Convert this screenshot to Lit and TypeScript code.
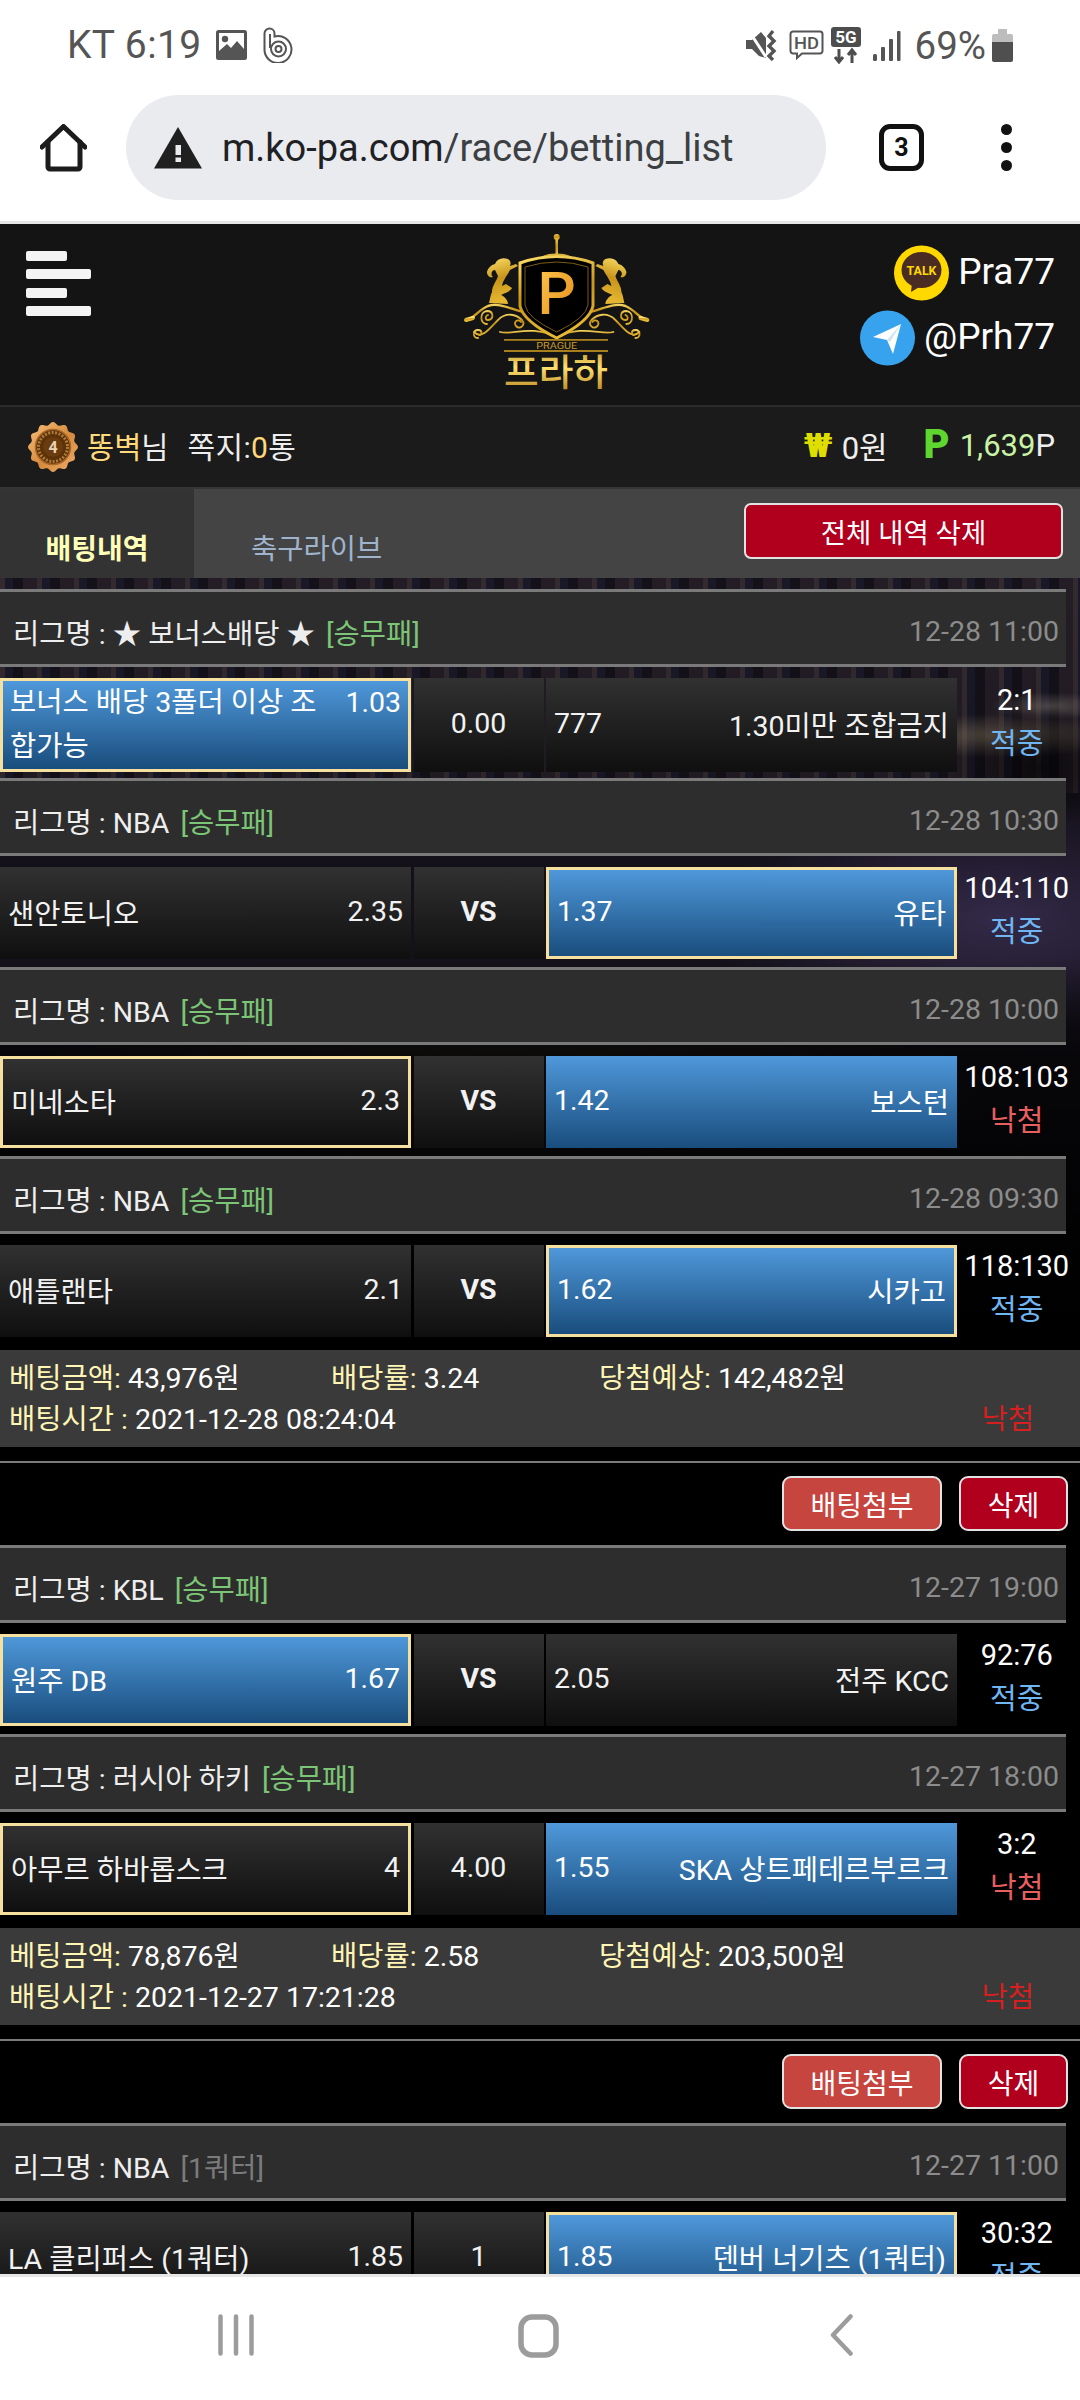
import { LitElement, html, css, svg } from "lit";
import { customElement } from "lit/decorators.js";
import { classMap } from "lit/directives/class-map.js";

interface Match {
  league: string; tag: string; grayTag?: boolean; date: string;
  home: string; homeOdds: string; mid: string; bold?: boolean;
  awayOdds: string; away: string;
  homeBlue?: boolean; homeBorder?: boolean; awayBlue?: boolean; awayBorder?: boolean;
  score: string; hit: boolean; wrapHome?: boolean;
}

const first: Match[] = [
  { league: "★ 보너스배당 ★", tag: "[승무패]", date: "12-28 11:00", home: "보너스 배당 3폴더 이상 조합가능", homeOdds: "1.03", mid: "0.00", awayOdds: "777", away: "1.30미만 조합금지", homeBlue: true, homeBorder: true, score: "2:1", hit: true, wrapHome: true },
  { league: "NBA", tag: "[승무패]", date: "12-28 10:30", home: "샌안토니오", homeOdds: "2.35", mid: "VS", bold: true, awayOdds: "1.37", away: "유타", awayBlue: true, awayBorder: true, score: "104:110", hit: true },
  { league: "NBA", tag: "[승무패]", date: "12-28 10:00", home: "미네소타", homeOdds: "2.3", mid: "VS", bold: true, awayOdds: "1.42", away: "보스턴", homeBorder: true, awayBlue: true, score: "108:103", hit: false },
  { league: "NBA", tag: "[승무패]", date: "12-28 09:30", home: "애틀랜타", homeOdds: "2.1", mid: "VS", bold: true, awayOdds: "1.62", away: "시카고", awayBlue: true, awayBorder: true, score: "118:130", hit: true },
];
const second: Match[] = [
  { league: "KBL", tag: "[승무패]", date: "12-27 19:00", home: "원주 DB", homeOdds: "1.67", mid: "VS", bold: true, awayOdds: "2.05", away: "전주 KCC", homeBlue: true, homeBorder: true, score: "92:76", hit: true },
  { league: "러시아 하키", tag: "[승무패]", date: "12-27 18:00", home: "아무르 하바롭스크", homeOdds: "4", mid: "4.00", awayOdds: "1.55", away: "SKA 상트페테르부르크", homeBorder: true, awayBlue: true, score: "3:2", hit: false },
];
const third: Match[] = [
  { league: "NBA", tag: "[1쿼터]", grayTag: true, date: "12-27 11:00", home: "LA 클리퍼스 (1쿼터)", homeOdds: "1.85", mid: "1", awayOdds: "1.85", away: "덴버 너기츠 (1쿼터)", awayBlue: true, awayBorder: true, score: "30:32", hit: true },
];

function scallop(cx: number, cy: number, r: number, amp: number, n: number): string {
  let d = "";
  for (let i = 0; i <= 120; i++) {
    const t = (i / 120) * Math.PI * 2;
    const rr = r + amp * Math.cos(n * t);
    d += `${i ? "L" : "M"}${(cx + rr * Math.sin(t)).toFixed(2)} ${(cy - rr * Math.cos(t)).toFixed(2)}`;
  }
  return d + "Z";
}

const lion = svg`<path d="M68 39C62 37 57 39 55 44C51 45 48 48 47 52C47 56 50 58 53 57C50 54 52 50 55 50L58 56C56 62 52 66 52 72C50 76 50 80 49 83L68 84C68 80 64 76 61 75C64 73 70 72 72 68L66 64L62 66C63 60 67 56 70 50L78 46L76 44L70 46C71 43 71 41 68 39Z" fill="url(#gold)"/>`;
const scrolls = svg`<g fill="none" stroke="url(#gold)" stroke-width="1.8" stroke-linecap="round">
  <path d="M26 100C34 99 38 90 48 86C60 82 72 90 84 92" stroke-width="2.4"/>
  <path d="M26 100L33 98" stroke-width="4"/>
  <path d="M34 112C42 120 50 108 58 100C66 92 76 94 82 100C86 105 80 110 76 106C73 102 78 98 81 102"/>
  <path d="M38 118C32 118 33 110 38 110C43 110 42 116 39 115"/>
  <path d="M47 104C40 104 39 92 47 91C54 91 54 100 48 100C45 100 45 96 48 95"/>
  <path d="M60 112C72 116 90 104 116 117"/>
</g>`;

@customElement("app-root")
export class AppRoot extends LitElement {
  static styles = css`
    :host { display: block; width: 1080px; height: 2400px; background: #fff; overflow: hidden;
      font-family: Roboto, "Noto Sans CJK KR", sans-serif; }
    .shell { display: flex; flex-direction: column; height: 2400px; }
    svg { display: block; flex: none; }

    .status { height: 85px; flex: none; display: flex; align-items: center; padding: 5px 67px 0; box-sizing: border-box;
      color: #555; font-size: 39px; background: #fff; }
    .clock { margin-right: 14px; letter-spacing: 0.4px; white-space: nowrap; }
    .b-icon { margin-left: 16px; }
    .status-right { margin-left: auto; display: flex; align-items: center; }
    .i-hd { margin-left: 12px; }
    .i-5g { margin-left: 7px; }
    .i-sig { margin-left: 11px; }
    .pct { margin: 0 6px 0 14px; font-size: 38.5px; }

    .toolbar { height: 139px; flex: none; display: flex; align-items: center; background: #fff; box-sizing: border-box;
      border-bottom: 3px solid #e6e6e4; padding: 0 0 11px 40px; }
    .pill { width: 700px; height: 105px; margin-left: 39px; border-radius: 53px; background: #eaebef; display: flex;
      align-items: center; padding-left: 28px; box-sizing: border-box; }
    .url { margin-left: 20px; font-size: 38px; color: #3c4043; white-space: nowrap; }
    .url b { font-weight: 400; color: #202124; }
    .tabcount { margin-left: 53px; width: 45px; height: 47px; box-sizing: border-box; border: 5px solid #111; border-radius: 11px;
      display: flex; align-items: center; justify-content: center; font-size: 25px; font-weight: 700; color: #111; }
    .dots { margin-left: 77px; display: flex; flex-direction: column; gap: 7px; }
    .dots i { width: 11px; height: 11px; border-radius: 50%; background: #111; display: block; }

    .page { flex: 1; min-height: 0; overflow: hidden; background: #000; color: #fff; font-size: 28.5px; }

    .head { height: 181px; background: #141414; display: flex; box-sizing: border-box; padding: 27px 25px 0 26px; }
    .burger { display: flex; flex-direction: column; gap: 8.3px; }
    .burger i { display: block; height: 10px; background: #f4f4f4; border-radius: 2px; width: 65px; }
    .burger i:nth-child(odd) { width: 41px; }
    .logo { margin-left: 349px; margin-top: -31px; }
    .contacts { margin-left: auto; display: flex; flex-direction: column; align-items: flex-end; gap: 10px; margin-top: -6px;
      font-size: 37px; }
    .contact { display: flex; align-items: center; gap: 9px; height: 55px; }
    .contact span { padding-bottom: 3px; }

    .user { height: 82px; box-sizing: border-box; border-top: 2px solid #2b2b2b; background: #1b1b1b; display: flex; align-items: center;
      padding: 0 25px 0 28px; }
    .nick { margin: 0 0 5px 9px; font-size: 29.5px; color: #eee; }
    .gold { color: #ffd97a; }
    .msg { margin: 0 0 5px 19px; font-size: 30px; color: #eee; letter-spacing: .4px; }
    .wallet { margin: 0 0 4px auto; display: flex; align-items: center; font-size: 31px; color: #eee; }
    .won { color: #dede00; font-weight: 900; font-size: 34px; margin-right: 9px; }
    .pts { color: #5ed62f; font-weight: 900; font-size: 40px; margin: 0 10px 0 36px; line-height: 1; }
    .pval { color: #c9f2a6; }
    .pval span { color: #eee; }

    .tabs { height: 91px; background: #444; border-top: 2px solid #353535; box-sizing: border-box; display: flex; }
    .tab { width: 194px; display: flex; align-items: flex-end; justify-content: center; padding-bottom: 11px; box-sizing: border-box; font-size: 28px; }
    .tab.on { background: #333; color: #ffffb8; font-weight: 700; }
    .tab.off { width: auto; margin-left: 57px; color: #a0b3cd; font-size: 28.5px; }
    .btn { box-sizing: border-box; border: 2px solid #e2e2e2; border-radius: 7px; background: #b0001e; color: #fff; display: flex;
      align-items: center; justify-content: center; font-size: 28px; white-space: nowrap; }
    .btn.all { width: 319px; height: 56px; margin: 14px 17px 0 auto; font-size: 27.5px; }

    .scene { padding-top: 11px; background:
      linear-gradient(180deg, rgba(0,0,0,0) 0, rgba(0,0,0,.15) 270px, rgba(0,0,0,.1) 380px, rgba(0,0,0,.7) 480px, #000 740px) 0 0 / 100% 100% no-repeat,
      radial-gradient(90px 60px at 1040px 190px, rgba(0,0,0,.65), transparent) 0 0 / 100% 100% no-repeat,
      radial-gradient(120px 22px at 1000px 158px, rgba(190,170,130,.4), transparent) 0 0 / 100% 100% no-repeat,
      radial-gradient(60px 14px at 1050px 128px, rgba(200,190,170,.3), transparent) 0 0 / 100% 100% no-repeat,
      repeating-linear-gradient(90deg, rgba(150,125,110,.22) 0 5px, rgba(40,50,90,.18) 5px 13px, rgba(0,0,0,.12) 13px 23px, rgba(130,100,100,.12) 23px 37px) 0 0 / 100% 215px no-repeat,
      radial-gradient(300px 120px at 1000px 340px, #3a2f52, transparent) 0 0 / 100% 100% no-repeat,
      radial-gradient(500px 110px at 500px 520px, #33291f, transparent) 0 0 / 100% 100% no-repeat,
      #17131d;
    }

    .league { width: 1066px; height: 78px; box-sizing: border-box; background: #2d2d2d; border-top: 3px solid #7a7a7a; border-bottom: 3px solid #7a7a7a;
      display: flex; align-items: center; padding: 7px 7px 0 13px; color: #eee; white-space: pre; }
    .tag { color: #7cc576; margin-left: 11px; }
    .tag.gray { color: #7b7b7b; }
    .date { margin-left: auto; color: #8c8c8c; }

    .row { width: 1074px; height: 92px; margin: 11px 0 8px; display: grid; grid-template-columns: 411px 130px 411px 1fr; column-gap: 2.5px; }
    .cell { box-sizing: border-box; background: linear-gradient(180deg, #313131, #0f0f0f); display: flex; align-items: center; justify-content: space-between;
      padding: 0 8px 3px; color: #f2f2f2; white-space: nowrap; min-width: 0; }
    .cell.blue { background: linear-gradient(180deg, #4f98da, #194d7d); color: #fff; }
    .cell.pick { border: 3px solid #f5e0a0; padding: 0 8px 3px; }
    .cell.mid { justify-content: center; }
    .cell.mid.vs { font-weight: 700; }
    .cell.wrap { display: block; white-space: normal; line-height: 44px; padding: 0 7px; }
    .wrap .odd { float: right; margin-left: 10px; }
    .score { display: flex; flex-direction: column; align-items: center; justify-content: center; line-height: 44px; white-space: nowrap; margin-top: -6px; font-size: 29px; }
    .hit { color: #6fb6f2; }
    .miss { color: #e85f60; }

    .summary { height: 97px; margin-top: 13px; box-sizing: border-box; background: #3a3a3a; padding: 5px 46px 0 9px; display: grid;
      grid-template-columns: 322px 268px 1fr auto; grid-auto-rows: 41px; align-items: center; white-space: nowrap; }
    .lbl { color: #fff5b5; }
    .time { grid-column: 1 / 4; }
    .lost { color: #d5201f; }

    .sep { height: 2px; background: #7a7a7a; margin-top: 14px; }
    .actions { display: flex; justify-content: flex-end; gap: 17px; height: 55px; padding-right: 12px; margin: 13px 0 14px; }
    .btn.att { width: 160px; background: #c6453e; border-radius: 9px; }
    .btn.del { width: 109px; border-radius: 9px; }

    .nav { height: 126px; flex: none; box-sizing: border-box; border-top: 3px solid #e6e6e6; background: #fff; display: grid;
      grid-template-columns: 218px 36px 264px 41px 271px 23px; padding-top: 37px; }
  `;

  private match(m: Match) {
    const home = classMap({ cell: true, blue: !!m.homeBlue, pick: !!m.homeBorder, wrap: !!m.wrapHome });
    const away = classMap({ cell: true, blue: !!m.awayBlue, pick: !!m.awayBorder });
    return html`
      <div class="league">
        <span>리그명 : ${m.league}</span><span class=${classMap({ tag: true, gray: !!m.grayTag })}>${m.tag}</span>
        <span class="date">${m.date}</span>
      </div>
      <div class="row">
        <div class=${home}>
          ${m.wrapHome
            ? html`<span class="odd">${m.homeOdds}</span>${m.home}`
            : html`<span>${m.home}</span><span>${m.homeOdds}</span>`}
        </div>
        <div class=${classMap({ cell: true, mid: true, vs: !!m.bold })}>${m.mid}</div>
        <div class=${away}><span>${m.awayOdds}</span><span>${m.away}</span></div>
        <div class="score">
          <span>${m.score}</span>
          <span class=${m.hit ? "hit" : "miss"}>${m.hit ? "적중" : "낙첨"}</span>
        </div>
      </div>`;
  }

  private summary(amount: string, rate: string, win: string, time: string) {
    return html`
      <div class="summary">
        <div><span class="lbl">베팅금액:</span> ${amount}</div>
        <div><span class="lbl">배당률:</span> ${rate}</div>
        <div><span class="lbl">당첨예상:</span> ${win}</div>
        <div></div>
        <div class="time"><span class="lbl">배팅시간 :</span> ${time}</div>
        <div class="lost">낙첨</div>
      </div>
      <div class="sep"></div>
      <div class="actions">
        <div class="btn att">배팅첨부</div>
        <div class="btn del">삭제</div>
      </div>`;
  }

  private statusBar() {
    return html`<div class="status">
      <span class="clock">KT 6:19</span>
      <svg width="31" height="30" viewBox="0 0 31 30"><rect width="31" height="30" rx="2.5" fill="#555"/><rect x="3" y="3" width="25" height="18" fill="#fff"/><circle cx="9" cy="9" r="3.2" fill="#555"/><path d="M3 21L11 14L15 18L21 11L28 19V24H3Z" fill="#555"/></svg>
      <svg class="b-icon" width="30" height="36" viewBox="0 0 30 36" fill="none" stroke="#555" stroke-width="2"><path d="M1.500 22V6.500a5 5 0 0 1 10 0V9.500a13.500 13.500 0 1 1-10 12.500Z"/><path d="M7 21V7"/><circle cx="15.500" cy="22" r="7.500"/><circle cx="15.500" cy="22" r="3"/></svg>
      <div class="status-right">
        <svg width="31" height="32" viewBox="0 0 31 32"><path d="M0 11H6L15 3L20 9V29L13 27L6 20H0Z" fill="#555"/><path d="M3 2L20 28" stroke="#fff" stroke-width="3"/><path d="M27 2L23 7L28 12L23 17L28 22L23 27L27 31" fill="none" stroke="#555" stroke-width="3.400"/></svg>
        <svg class="i-hd" width="35" height="30" viewBox="0 0 35 30"><path d="M4 1.500H31a2.500 2.500 0 0 1 2.500 2.500V21a2.500 2.500 0 0 1-2.500 2.500H13L8 28V23.500H4A2.500 2.500 0 0 1 1.500 21V4A2.500 2.500 0 0 1 4 1.500Z" fill="#fff" stroke="#555" stroke-width="2"/><text x="17.500" y="19" text-anchor="middle" font-family="Roboto" font-size="17" font-weight="500" fill="#555" textLength="25" lengthAdjust="spacingAndGlyphs">HD</text></svg>
        <svg class="i-5g" width="30" height="37" viewBox="0 0 30 37"><rect width="30" height="20" rx="3" fill="#4d4d4d"/><text x="15" y="16" text-anchor="middle" font-family="Roboto" font-size="17" font-weight="700" fill="#fff">5G</text><path d="M8 22V34M4 30L8 35L12 30M21 36V24M17 28L21 23L25 28" fill="none" stroke="#4d4d4d" stroke-width="3"/></svg>
        <svg class="i-sig" width="29" height="31" viewBox="0 0 29 31" fill="#555"><rect x="1" y="24" width="4" height="7" rx="1.500"/><rect x="9" y="17" width="4" height="14" rx="1"/><rect x="17" y="9" width="4" height="22" rx="1"/><rect x="25" y="1" width="3.500" height="30" rx="1"/></svg>
        <span class="pct">69%</span>
        <svg width="21" height="33" viewBox="0 0 21 33"><rect x="6" y="0" width="9" height="6" fill="#bdbdbd"/><path d="M2 5H19a2 2 0 0 1 2 2V13H0V7a2 2 0 0 1 2-2Z" fill="#bdbdbd"/><path d="M0 13H21V31a2 2 0 0 1-2 2H2a2 2 0 0 1-2-2Z" fill="#4f4f4f"/></svg>
      </div>
    </div>`;
  }

  private toolbar() {
    return html`<div class="toolbar">
      <svg width="47" height="48" viewBox="0 0 47 48" fill="none" stroke="#1c1c1c" stroke-width="5" stroke-linecap="round" stroke-linejoin="round"><path d="M2 23L23.500 2.500L45 23"/><path d="M8 18V43a2 2 0 0 0 2 2H38a2 2 0 0 0 2-2V18"/></svg>
      <div class="pill">
        <svg width="48" height="42" viewBox="0 0 48 42"><path d="M24 0L48 41.500H0Z" fill="#202020"/><rect x="21.500" y="18" width="5.500" height="10" fill="#eaebef"/><rect x="21.500" y="30.500" width="5.500" height="4.500" fill="#eaebef"/></svg>
        <span class="url"><b>m.ko-pa.com</b>/race/betting_list</span>
      </div>
      <div class="tabcount">3</div>
      <div class="dots"><i></i><i></i><i></i></div>
    </div>`;
  }

  private logo() {
    return html`<svg class="logo" width="220" height="175" viewBox="0 0 220 175">
      <defs>
        <linearGradient id="gold" x1="0" y1="0" x2="0.2" y2="1"><stop offset="0" stop-color="#fbe06a"/><stop offset=".5" stop-color="#c8941a"/><stop offset="1" stop-color="#e6b832"/></linearGradient>
        <linearGradient id="goldp" x1="0" y1="0" x2="1" y2="1"><stop offset="0" stop-color="#ffc850"/><stop offset="1" stop-color="#e08a16"/></linearGradient>
        <linearGradient id="goldt" x1="0" y1="0" x2="0" y2="1"><stop offset="0" stop-color="#a87a12"/><stop offset=".45" stop-color="#ffe070"/><stop offset="1" stop-color="#a87612"/></linearGradient>
      </defs>
      <rect x="115.500" y="18" width="2.500" height="20" fill="url(#gold)"/>
      <circle cx="116.700" cy="17" r="3" fill="url(#gold)"/>
      <path d="M100 38C105 32 128 32 133 38L116.700 35Z" fill="url(#gold)"/>
      ${lion}
      <g transform="translate(233.400,0) scale(-1,1)">${lion}${scrolls}</g>
      ${scrolls}
      <path d="M80 43Q117 30 153 43L153 86Q150 101 116.700 118Q83 101 80 86Z" fill="#000" stroke="url(#gold)" stroke-width="3"/>
      <path d="M85 47Q117 37 148 47L148 85Q146 98 116.700 112Q87 98 85 85Z" fill="none" stroke="#7a5c14" stroke-width="1"/>
      <text x="116.700" y="94" text-anchor="middle" font-family="Roboto" font-weight="500" font-size="60" fill="url(#goldp)">P</text>
      <rect x="64" y="119" width="104" height="1.800" fill="#a97f1d"/>
      <rect x="64" y="130" width="104" height="2" fill="#a97f1d"/>
      <text x="116.700" y="129" text-anchor="middle" font-family="Roboto" font-size="9.500" fill="#c59a2c" textLength="41" lengthAdjust="spacingAndGlyphs">PRAGUE</text>
      <text x="116" y="166" text-anchor="middle" font-family="'Noto Sans CJK KR'" font-size="37" font-weight="500" fill="url(#goldt)" textLength="104" lengthAdjust="spacingAndGlyphs">프라하</text>
    </svg>`;
  }

  render() {
    return html`<div class="shell">
      ${this.statusBar()}
      ${this.toolbar()}
      <div class="page">
        <div class="head">
          <div class="burger"><i></i><i></i><i></i><i></i></div>
          ${this.logo()}
          <div class="contacts">
            <div class="contact">
              <svg width="55" height="56" viewBox="0 0 55 56"><circle cx="27.500" cy="28" r="27.500" fill="#ffd800"/><ellipse cx="27.500" cy="25" rx="20" ry="18" fill="#4a2c23"/><path d="M18 38L17 47L27 41Z" fill="#4a2c23"/><text x="27.500" y="30" text-anchor="middle" font-family="Roboto" font-weight="700" font-size="13.500" fill="#ffd800" textLength="30" lengthAdjust="spacingAndGlyphs">TALK</text></svg>
              <span>Pra77</span>
            </div>
            <div class="contact">
              <svg width="55" height="56" viewBox="0 0 55 56"><circle cx="27.500" cy="28" r="27.500" fill="#37a3ee"/><path d="M13 27L41 14L33 44L27 30Z" fill="#fff"/><path d="M27 30L41 14L30 32Z" fill="#cfe5f7"/></svg>
              <span>@Prh77</span>
            </div>
          </div>
        </div>
        <div class="user">
          <svg width="50" height="50" viewBox="0 0 50 50">
            <defs><linearGradient id="bz" x1="0" y1="0" x2="1" y2="1"><stop offset="0" stop-color="#f7c07a"/><stop offset=".55" stop-color="#d68a3c"/><stop offset="1" stop-color="#f0b070"/></linearGradient></defs>
            <path d=${scallop(25, 25, 23.5, 1.5, 12)} fill="url(#bz)"/>
            <circle cx="25" cy="25" r="17.500" fill="#5c3208" stroke="#a8682a" stroke-width="1.500"/>
            <circle cx="25" cy="25" r="14.500" fill="none" stroke="#b07a3a" stroke-width="3" stroke-dasharray="2 1.500"/>
            <circle cx="25" cy="25" r="10" fill="#6a3c10"/>
            <text x="25" y="31" text-anchor="middle" font-family="Roboto" font-weight="700" font-size="16" fill="#e8d4b0">4</text>
          </svg>
          <span class="nick"><span class="gold">똥벽</span>님</span>
          <span class="msg">쪽지:<span class="gold">0</span>통</span>
          <div class="wallet">
            <span class="won">₩</span><span>0원</span>
            <span class="pts">P</span><span class="pval">1,639<span>P</span></span>
          </div>
        </div>
        <div class="tabs">
          <div class="tab on">배팅내역</div>
          <div class="tab off">축구라이브</div>
          <div class="btn all">전체 내역 삭제</div>
        </div>
        <div class="scene">
          ${first.map((m) => this.match(m))}
        </div>
        ${this.summary("43,976원", "3.24", "142,482원", "2021-12-28 08:24:04")}
        ${second.map((m) => this.match(m))}
        ${this.summary("78,876원", "2.58", "203,500원", "2021-12-27 17:21:28")}
        ${third.map((m) => this.match(m))}
      </div>
      <div class="nav">
        <span></span>
        <svg width="36" height="42" viewBox="0 0 36 42" stroke="#9c9c9c" stroke-width="4.500" stroke-linecap="round"><path d="M2.500 2.500V39.500M18 2.500V39.500M33.500 2.500V39.500"/></svg>
        <span></span>
        <svg width="41" height="44" viewBox="0 0 41 44" fill="none" stroke="#9c9c9c" stroke-width="5.500"><rect x="3" y="3" width="35" height="38" rx="11"/></svg>
        <span></span>
        <svg width="23" height="42" viewBox="0 0 23 42" fill="none" stroke="#9c9c9c" stroke-width="4.500" stroke-linecap="round" stroke-linejoin="round"><path d="M20.500 2.500L3 21L20.500 39.500"/></svg>
      </div>
    </div>`;
  }
}
